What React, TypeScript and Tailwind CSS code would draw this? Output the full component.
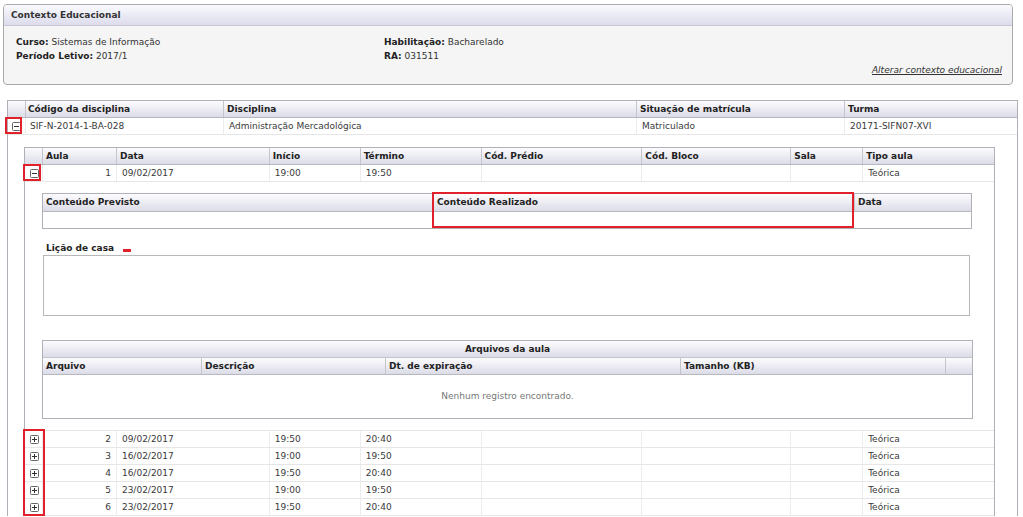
import React from "react";

const F = { fontFamily: '"DejaVu Sans", Verdana, sans-serif' };

function MinusIcon() {
  return (
    <svg width="9" height="9" viewBox="0 0 9 9">
      <rect x="0.5" y="0.5" width="8" height="8" rx="1" fill="#fff" stroke="#666" />
      <line x1="2" y1="4.5" x2="7" y2="4.5" stroke="#333" />
    </svg>
  );
}
function PlusIcon() {
  return (
    <svg width="9" height="9" viewBox="0 0 9 9">
      <rect x="0.5" y="0.5" width="8" height="8" rx="1" fill="#fff" stroke="#666" />
      <line x1="2" y1="4.5" x2="7" y2="4.5" stroke="#333" />
      <line x1="4.5" y1="2" x2="4.5" y2="7" stroke="#333" />
    </svg>
  );
}

type Cell = { w: number; c?: React.ReactNode; cls?: string };

function HeadRow({ cells, h = 17 }: { cells: Cell[]; h?: number }) {
  return (
    <div className="flex bg-gradient-to-b from-[#fcfcfe] to-[#dcdce8] border-b border-[#b8b8c0]" style={{ height: h }}>
      {cells.map((c, i) => (
        <div
          key={i}
          className={`flex items-center pl-[3px] font-bold text-[#222] ${i > 0 ? "border-l border-[#c4c4cc]" : ""} ${c.cls ?? ""}`}
          style={{ width: c.w }}
        >
          {c.c}
        </div>
      ))}
    </div>
  );
}

function BodyRow({ cells, h = 17 }: { cells: Cell[]; h?: number }) {
  return (
    <div className="flex border-b border-[#e6e6e6]" style={{ height: h }}>
      {cells.map((c, i) => (
        <div
          key={i}
          className={`flex items-center pl-[5px] text-[#3a3a3a] ${i > 0 ? "border-l border-[#ececec]" : ""} ${c.cls ?? ""}`}
          style={{ width: c.w }}
        >
          {c.c}
        </div>
      ))}
    </div>
  );
}

const innerW = [17, 74, 153, 91, 121, 161, 149, 72, 132];

const rows = [
  ["2", "09/02/2017", "19:50", "20:40"],
  ["3", "16/02/2017", "19:00", "19:50"],
  ["4", "16/02/2017", "19:50", "20:40"],
  ["5", "23/02/2017", "19:00", "19:50"],
  ["6", "23/02/2017", "19:50", "20:40"],
];

function aulaRow(r: string[], icon: React.ReactNode, key?: number) {
  return (
    <BodyRow
      key={key}
      cells={[
        { w: innerW[0], c: icon, cls: "justify-center !pl-[2px]" },
        { w: innerW[1], c: r[0], cls: "justify-end pr-[5px]" },
        { w: innerW[2], c: r[1] },
        { w: innerW[3], c: r[2] },
        { w: innerW[4], c: r[3] },
        { w: innerW[5] },
        { w: innerW[6] },
        { w: innerW[7] },
        { w: innerW[8], c: "Teórica" },
      ]}
    />
  );
}

export default function App() {
  return (
    <div className="relative w-[1023px] h-[517px] overflow-hidden bg-white text-[9px] leading-none" style={F}>
      {/* Panel */}
      <div className="ml-[3px] mt-[4px] w-[1010px] h-[81px] border border-[#a9a9a9] rounded-[4px] overflow-hidden bg-[#f5f5f5]">
        <div className="h-[21px] flex items-center pl-[7px] bg-gradient-to-b from-[#fafafe] to-[#dcdcec] border-b border-[#c8c8d4] text-[#333] font-bold">
          Contexto Educacional
        </div>
        <div className="pt-[9px] pl-[12px] pr-[10px] text-[#333] leading-[14px]">
          <div className="flex">
            <div className="w-[368px]">
              <div><b className="text-[#222]">Curso:</b> Sistemas de Informação</div>
              <div><b className="text-[#222]">Período Letivo:</b> 2017/1</div>
            </div>
            <div>
              <div><b className="text-[#222]">Habilitação:</b> Bacharelado</div>
              <div><b className="text-[#222]">RA:</b> 031511</div>
            </div>
          </div>
          <div className="flex justify-end">
            <span className="italic underline text-[#333]">Alterar contexto educacional</span>
          </div>
        </div>
      </div>

      {/* Main table */}
      <div className="ml-[7px] mt-[15px] w-[1011px] border-l border-r border-t border-[#b0b0b8]">
        <HeadRow
          cells={[
            { w: 17 },
            { w: 198, c: "Código da disciplina", cls: "!pl-[2px]" },
            { w: 413, c: "Disciplina" },
            { w: 208, c: "Situação de matrícula" },
            { w: 173, c: "Turma" },
          ]}
        />
        <BodyRow
          cells={[
            { w: 17, c: <MinusIcon />, cls: "justify-center !pl-[0px]" },
            { w: 198, c: "SIF-N-2014-1-BA-028", cls: "!pl-[4px]" },
            { w: 413, c: "Administração Mercadológica" },
            { w: 208, c: "Matriculado" },
            { w: 173, c: "20171-SIFN07-XVI" },
          ]}
        />
        {/* Expanded area */}
        <div className="pl-[16px] pt-[12px]">
          <div className="w-[971px] border-l border-r border-t border-[#b0b0b8]">
            <HeadRow
              cells={[
                { w: innerW[0] },
                { w: innerW[1], c: "Aula" },
                { w: innerW[2], c: "Data" },
                { w: innerW[3], c: "Início" },
                { w: innerW[4], c: "Término" },
                { w: innerW[5], c: "Cód. Prédio" },
                { w: innerW[6], c: "Cód. Bloco" },
                { w: innerW[7], c: "Sala" },
                { w: innerW[8], c: "Tipo aula" },
              ]}
            />
            {aulaRow(["1", "09/02/2017", "19:00", "19:50"], <MinusIcon />)}

            {/* Aula detail */}
            <div className="h-[249px] border-b border-[#e6e6e6] pl-[17px] pt-[11px]">
              {/* Conteudo table */}
              <div className="w-[930px] border border-[#b0b0b8]">
                <HeadRow
                  h={18}
                  cells={[
                    { w: 390, c: "Conteúdo Previsto" },
                    { w: 421, c: "Conteúdo Realizado" },
                    { w: 117, c: "Data" },
                  ]}
                />
                <div className="h-[16px]" />
              </div>
              <div className="mt-[12px] pl-[4px] font-bold text-[#222] h-[14px] flex items-center">
                Lição de casa
              </div>
              <div className="ml-[1px] w-[927px] h-[61px] border border-[#b8b8b8] bg-white" />
              {/* Arquivos table */}
              <div className="mt-[24px] w-[931px] border border-[#b0b0b8]">
                <div className="h-[17px] flex items-center justify-center font-bold text-[#222] bg-gradient-to-b from-[#fcfcfe] to-[#dcdce8] border-b border-[#c4c4cc]">
                  Arquivos da aula
                </div>
                <HeadRow
                  cells={[
                    { w: 158, c: "Arquivo" },
                    { w: 184, c: "Descrição" },
                    { w: 295, c: "Dt. de expiração" },
                    { w: 265, c: "Tamanho (KB)" },
                    { w: 27 },
                  ]}
                />
                <div className="h-[43px] flex items-center justify-center text-[#777]">
                  Nenhum registro encontrado.
                </div>
              </div>
            </div>

            {rows.map((r, i) => aulaRow(r, <PlusIcon />, i))}
          </div>
        </div>
      </div>

      {/* Annotation overlays */}
      <div className="absolute left-[5px] top-[117px] w-[17px] h-[17px] border-2 border-[#e0202a]" />
      <div className="absolute left-[23px] top-[164px] w-[18px] h-[17px] border-2 border-[#e0202a]" />
      <div className="absolute left-[432px] top-[192px] w-[422px] h-[36px] border-2 border-[#e0202a]" />
      <div className="absolute left-[123px] top-[249px] w-[8px] h-[3px] bg-[#e0202a]" />
      <div className="absolute left-[23px] top-[429px] w-[22px] h-[87px] border-2 border-[#e0202a]" />
    </div>
  );
}
